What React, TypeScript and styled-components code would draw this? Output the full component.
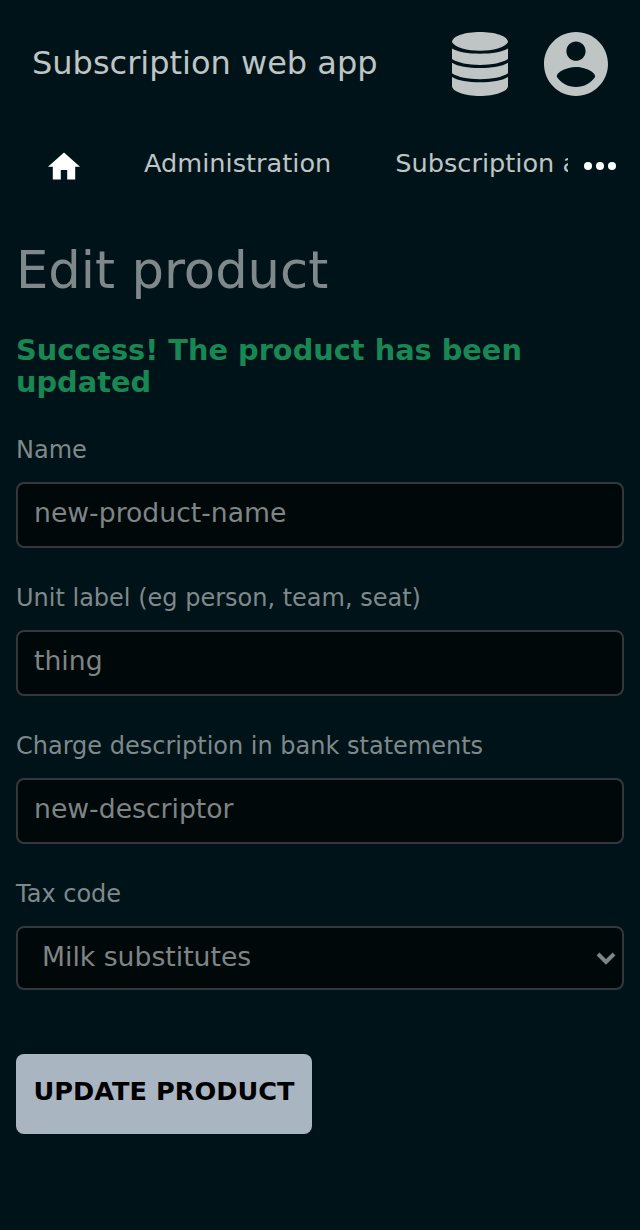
import React from "react";
import styled, { createGlobalStyle } from "styled-components";

const GlobalStyle = createGlobalStyle`
  * { box-sizing: border-box; }
  body {
    margin: 0;
    min-height: 1230px;
    background: #001318;
    color: #7f898b;
    font-family: "DejaVu Sans", sans-serif;
  }
`;

const Header = styled.header`
  display: flex;
  align-items: center;
  height: 128px;
  padding: 0 32px;
  color: #bfc4c5;
`;

const Brand = styled.div`
  flex: 1;
  padding-bottom: 2px;
  font-size: 32px;
  line-height: 40px;
  white-space: nowrap;
`;

const HeaderIcons = styled.div`
  display: flex;
  gap: 36px;
  svg { display: block; fill: currentColor; }
`;

const Nav = styled.nav`
  display: flex;
  height: 72px;
  color: #bfc4c5;
`;

const NavLinks = styled.div`
  display: flex;
  width: 568px;
  padding-left: 16px;
  overflow: hidden;
`;

const NavLink = styled.a`
  flex: none;
  padding: 20px 32px 0;
  font-size: 25.6px;
  line-height: 30px;
  white-space: nowrap;
`;

const HomeLink = styled(NavLink)`
  padding-top: 24px;
  svg { display: block; fill: #fff; }
`;

const More = styled.div`
  padding: 34px 0 0 16px;
  svg { display: block; fill: #fff; }
`;

const Main = styled.main`
  padding: 40px 16px 0;
`;

const Title = styled.h1`
  margin: 0;
  font-size: 51.2px;
  font-weight: 400;
  line-height: 60px;
`;

const Notice = styled.p`
  margin: 34px 0 36px;
  color: #198754;
  font-size: 28.8px;
  font-weight: 700;
  line-height: 32px;
`;

const Field = styled.label`
  display: block;
  height: 148px;
  font-size: 24px;
  line-height: 32px;
`;

const Control = styled.div<{ $select?: boolean }>`
  display: flex;
  align-items: center;
  justify-content: space-between;
  height: ${(p) => (p.$select ? 64 : 66)}px;
  margin-top: 16px;
  padding: ${(p) => (p.$select ? "0 6px 2px 24px" : "0 16px 4px")};
  border: 2px solid #34383d;
  border-radius: 8px;
  background: #00080a;
  color: #7f8484;
  font-size: 26.667px;
  svg { display: block; margin-top: 4px; }
`;

const Input = styled.input`
  width: 100%;
  padding: 0;
  border: 0;
  outline: 0;
  background: none;
  color: inherit;
  font: inherit;
`;

const Submit = styled.button`
  display: block;
  width: 296px;
  height: 80px;
  margin-top: 28px;
  padding: 0 0 6px;
  border: 0;
  border-radius: 8px;
  background: #a9b5c1;
  color: #000;
  font: 700 25.6px "DejaVu Sans", sans-serif;
  white-space: nowrap;
`;

const DatabaseIcon = () => (
  <svg width="56" height="64" viewBox="0 0 56 64">
    <path d="M28 0C43 0 56 4 56 10.3C53 15.5 41 18.8 28 18.8S3 15.5 0 10.3C0 4 13 0 28 0Z" />
    <path d="M0 16.5C6 20 16 21.7 28 21.7S50 20 56 16.5V27C50 31 40 32.9 28 32.9S6 31 0 27Z" />
    <path d="M0 30.7C6 34.4 16 36 28 36S50 34.4 56 30.7V41.3C50 45.3 40 47.2 28 47.2S6 45.3 0 41.3Z" />
    <path d="M0 45C6 48.7 16 50.3 28 50.3S50 48.7 56 45V54C56 59.5 43 64 28 64S0 59.5 0 54Z" />
  </svg>
);

const AccountIcon = () => (
  <svg width="64" height="64" viewBox="2 2 20 20">
    <path d="M12 2C6.48 2 2 6.48 2 12s4.48 10 10 10 10-4.48 10-10S17.52 2 12 2zm0 3c1.66 0 3 1.34 3 3s-1.34 3-3 3-3-1.34-3-3 1.34-3 3-3zm0 14.2c-2.5 0-4.71-1.28-6-3.22.03-1.99 4-3.08 6-3.08 1.99 0 5.97 1.09 6 3.08-1.29 1.94-3.5 3.22-6 3.22z" />
  </svg>
);

const fields = [
  { label: "Name", value: "new-product-name" },
  { label: "Unit label (eg person, team, seat)", value: "thing" },
  { label: "Charge description in bank statements", value: "new-descriptor" },
];

export default function App() {
  return (
    <>
      <GlobalStyle />
      <Header>
        <Brand>Subscription web app</Brand>
        <HeaderIcons>
          <DatabaseIcon />
          <AccountIcon />
        </HeaderIcons>
      </Header>
      <Nav>
        <NavLinks>
          <HomeLink>
            <svg width="32" height="28" viewBox="2 2.75 20 17.5">
              <path d="M10 20v-6h4v6h5v-8h3L12 3 2 12h3v8z" />
            </svg>
          </HomeLink>
          <NavLink>Administration</NavLink>
          <NavLink>Subscription administration</NavLink>
        </NavLinks>
        <More>
          <svg width="32" height="8" viewBox="0 0 32 8">
            <circle cx="4" cy="4" r="4" />
            <circle cx="16" cy="4" r="4" />
            <circle cx="28" cy="4" r="4" />
          </svg>
        </More>
      </Nav>
      <Main>
        <Title>Edit product</Title>
        <Notice>Success! The product has been updated</Notice>
        {fields.map((f) => (
          <Field key={f.label}>
            {f.label}
            <Control>
              <Input defaultValue={f.value} />
            </Control>
          </Field>
        ))}
        <Field as="div">
          Tax code
          <Control $select>
            Milk substitutes
            <svg width="20" height="14" viewBox="0 0 20 14" fill="none" stroke="currentColor" strokeWidth="4">
              <path d="M2 2l8 8 8-8" />
            </svg>
          </Control>
        </Field>
        <Submit>UPDATE PRODUCT</Submit>
      </Main>
    </>
  );
}
